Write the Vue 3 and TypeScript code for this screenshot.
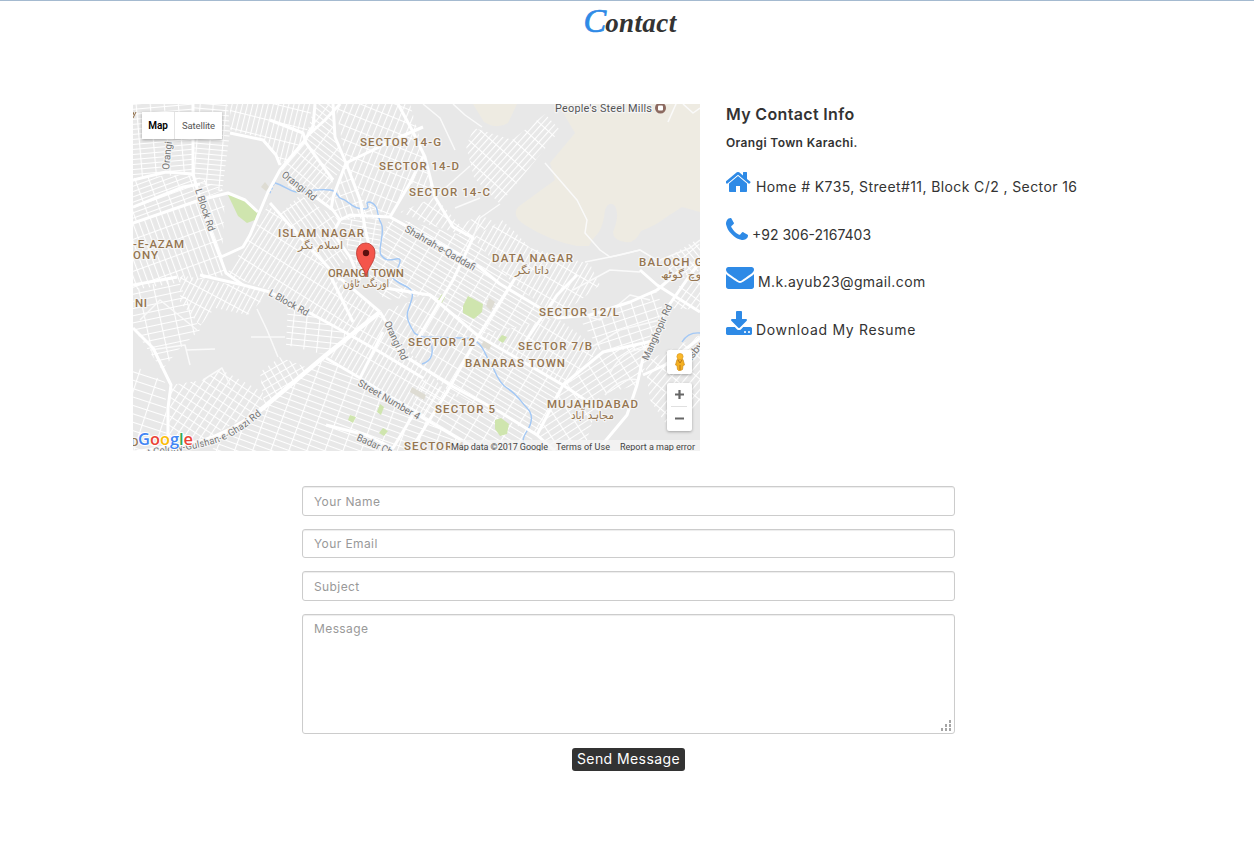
<script setup lang="ts">
interface Patch { pts: string; a: number; w: number; h: number }
interface Label { t: string; x: number; y: number; w: number; r?: number }

const patches: Patch[] = [
  { pts: '133,104 193,104 193,174 133,178', a: -5, w: 14, h: 5 },
  { pts: '193,104 228,104 230,132 222,192 193,180', a: 5, w: 13, h: 5 },
  { pts: '230,104 313,104 305,140 282,165 262,138 230,130', a: 14, w: 5, h: 17 },
  { pts: '133,178 193,174 224,190 200,200 133,222', a: -20, w: 13, h: 5 },
  { pts: '133,223 200,200 225,197 222,257 226,275 133,290', a: -20, w: 6, h: 15 },
  { pts: '248,240 268,205 300,237 335,280 380,312 350,335 270,290 226,275', a: 32, w: 5, h: 18 },
  { pts: '315,104 333,104 335,137 346,163 333,180 305,140', a: 38, w: 17, h: 5 },
  { pts: '335,104 410,104 425,157 435,197 410,183 390,217 366,205 346,163', a: 22, w: 6, h: 13 },
  { pts: '280,165 305,140 333,180 330,205 290,190', a: 40, w: 5, h: 15 },
  { pts: '346,163 366,205 390,217 340,220 331,210', a: -20, w: 6, h: 12 },
  { pts: '300,195 340,220 333,233 350,257 330,275 280,214', a: -35, w: 5, h: 16 },
  { pts: '340,220 381,218 381,250 366,277 350,257', a: 10, w: 12, h: 5 },
  { pts: '466,146 474,128 512,140 545,114 560,130 500,204 474,178', a: 42, w: 5, h: 15 },
  { pts: '435,197 460,225 480,215 495,222 473,238 430,225 400,212', a: 35, w: 6, h: 13 },
  { pts: '390,217 473,238 510,280 557,318 477,335 430,295 385,300 366,277', a: 31, w: 15, h: 5 },
  { pts: '473,238 502,220 515,232 530,248 590,264 600,285 557,318 510,280', a: 30, w: 5, h: 17 },
  { pts: '380,312 430,295 477,335 447,390 386,328', a: 31, w: 6, h: 16 },
  { pts: '326,355 380,312 386,328 447,392 423,418', a: 30, w: 5, h: 21 },
  { pts: '263,408 326,358 423,418 480,451 210,451', a: 20, w: 17, h: 6 },
  { pts: '423,378 447,390 537,435 520,451 475,451 410,410', a: 31, w: 16, h: 6 },
  { pts: '477,335 557,318 600,350 563,385', a: 31, w: 5, h: 17 },
  { pts: '447,392 477,338 563,385 537,435', a: 31, w: 17, h: 5 },
  { pts: '563,385 603,352 657,342 637,385 600,395 587,440 555,450 537,435', a: -33, w: 14, h: 6 },
  { pts: '580,320 657,291 663,310 645,350 600,350', a: -18, w: 11, h: 8 },
  { pts: '645,362 700,335 700,405 670,430 650,400', a: 40, w: 6, h: 16 },
  { pts: '667,308 693,262 700,256 700,310', a: 36, w: 6, h: 14 },
  { pts: '660,262 696,240 700,245 700,270 680,280', a: -40, w: 5, h: 12 },
  { pts: '133,290 177,277 200,330 180,348 162,370 133,328', a: -12, w: 15, h: 7 },
  { pts: '171,385 203,380 220,369 263,392 262,408 200,442 168,451', a: 33, w: 7, h: 8 },
  { pts: '133,365 165,382 168,451 133,451', a: 18, w: 19, h: 8 },
  { pts: '180,275 270,292 248,315 215,308 200,326 180,302', a: 28, w: 5, h: 16 },
  { pts: '260,372 280,357 308,368 264,405', a: -30, w: 7, h: 7 },
  { pts: '288,302 350,335 326,355 286,345', a: 6, w: 13, h: 6 },
]

const roads = [
  'M315 104 313 127 305 140 280 170 268 192 250 235 243 247 221 257',
  'M340 104 325 120 305 138', 'M133 180 166 172 193 174 205 217 226 273 243 285',
  'M133 207 183 187 200 184', 'M133 223 200 200 228 193 245 200 258 212',
  'M270 203 300 237 340 280', 'M230 133 263 140 276 155 280 165', 'M193 104V174',
  'M270 120 303 133 306 143 333 180', 'M333 104 335 137 346 163 360 200 366 233 373 260',
  'M346 163 400 137 423 127', 'M346 163 333 197 331 210',
  'M310 193 333 210 340 220 350 215 390 217 473 262 500 284 557 318',
  'M390 217 410 183 423 157', 'M340 220 333 233 350 257 360 280',
  'M398 104 412 130 425 157 435 197 453 227 473 238 453 280 417 340',
  'M700 262 690 275 667 308 643 358 637 385 627 415 597 451',
  'M640 270 657 285 700 312', 'M557 318 590 315 630 302 657 290 690 262',
  'M385 288 430 295 477 335 563 385 600 410', 'M403 355 450 385 500 412 537 435 555 451',
  'M517 275 477 338 447 392 410 451', 'M537 435 563 385 603 352 657 340',
  'M643 375 665 365 700 338', 'M525 342 557 295 577 275',
  'M200 275 243 285 270 292 310 313 350 335 380 352 423 378',
  'M133 328 153 348 171 385 168 408 168 451', 'M326 358 360 378 423 418 480 451',
  'M133 285 177 277', 'M383 332 360 378', 'M380 312 386 322 403 358',
  'M330 275 353 322', 'M340 278 380 312', 'M326 425 366 435 393 448 413 415',
]

const lanes = [
  'M453 104 465 115 482 127', 'M423 104 440 118 455 150', 'M545 163 577 200 587 220 585 233 600 250 610 257 640 250 660 262',
  'M500 204 480 218 473 238', 'M585 262 620 255 640 250', 'M676 104 668 122', 'M683 104 693 113 700 108',
  'M257 309 267 330 278 357', 'M251 337H285', 'M186 350 215 349', 'M203 380 222 368 230 385', 'M573 290 610 270 640 272',
  'M565 310 600 320 630 295 650 300', 'M610 373Q625 345 650 350', 'M605 395Q622 376 638 380', 'M655 262 690 248 700 240',
  'M140 320 160 300 197 330', 'M150 350 185 345 190 365', 'M590 348 620 330 660 320', 'M435 197 470 166', 'M455 208 480 198',
]

const areas: Label[] = [
  { t: 'SECTOR 14-G', x: 360, y: 146, w: 81 },
  { t: 'SECTOR 14-D', x: 379, y: 170, w: 80 },
  { t: 'SECTOR 14-C', x: 409, y: 196, w: 81 },
  { t: 'ISLAM NAGAR', x: 278, y: 237, w: 86 },
  { t: 'ORANGI TOWN', x: 328, y: 277, w: 76 },
  { t: 'DATA NAGAR', x: 492, y: 262, w: 81 },
  { t: 'BALOCH GOTH', x: 639, y: 266, w: 90 },
  { t: 'SECTOR 12/L', x: 539, y: 316, w: 80 },
  { t: 'SECTOR 12', x: 408, y: 346, w: 67 },
  { t: 'SECTOR 7/B', x: 518, y: 350, w: 74 },
  { t: 'BANARAS TOWN', x: 465, y: 367, w: 100 },
  { t: 'SECTOR 5', x: 435, y: 413, w: 60 },
  { t: 'MUJAHIDABAD', x: 547, y: 408, w: 91 },
  { t: 'SECTOR 4', x: 404, y: 450, w: 60 },
  { t: '-E-AZAM', x: 133, y: 248, w: 51 },
  { t: 'ONY', x: 133, y: 259, w: 25 },
  { t: 'NI', x: 135, y: 307, w: 12 },
  { t: 'D', x: 131, y: 446, w: 8 },
]
const urdu: Label[] = [
  { t: 'اسلام نگر', x: 298, y: 249, w: 45 },
  { t: 'اورنگی ٹاؤن', x: 343, y: 287, w: 46 },
  { t: 'داتا نگر', x: 515, y: 274, w: 34 },
  { t: 'بلوچ گوٹھ', x: 661, y: 278, w: 48 },
  { t: 'مجاہد آباد', x: 571, y: 419, w: 43 },
]
const streets: Label[] = [
  { t: 'Orangi Rd', x: 281, y: 176, w: 41, r: 38 },
  { t: 'Orangi Rd', x: 169, y: 170, w: 42, r: -84 },
  { t: 'L Block Rd', x: 195, y: 190, w: 44, r: 72 },
  { t: 'Shahrah-e-Qaddafi', x: 404, y: 231, w: 80, r: 30 },
  { t: 'L Block Rd', x: 268, y: 295, w: 44, r: 29 },
  { t: 'Orangi Rd', x: 384, y: 323, w: 42, r: 65 },
  { t: 'Street Number 4', x: 357, y: 385, w: 70, r: 30 },
  { t: 'Badar Chowk', x: 356, y: 440, w: 55, r: 24 },
  { t: 'Manghopir Rd', x: 648, y: 361, w: 60, r: -66 },
  { t: 'Kasby', x: 685, y: 369, w: 30, r: -52 },
]
const parks = [
  '228,195 241,197 258,212 255,220 247,223 238,216', '463,306 468,296 483,304 482,312 474,319 463,313',
  '438,300 442,294 445,297 442,303', '498,340 502,335 507,337 503,343', '495,420 501,418 509,424 507,434 500,436 495,429',
  '377,412 380,404 384,407 381,415', '348,420 350,415 356,417 353,423', '379,433 383,428 388,431 384,436',
]
const dots = [[9, 0], [5, 4], [9, 4], [1, 8], [5, 8], [9, 8]]

const contacts = [
  { id: 'home', text: 'Home # K735, Street#11, Block C/2 , Sector 16', w: 26, h: 21, box: '64 192 1664 1344',
    d: 'M1408 992v480q0 26-19 45t-45 19h-384v-384h-256v384h-384q-26 0-45-19t-19-45v-480q0-1 .5-3t.5-3l575-474 575 474q1 2 1 6zm223-69l-62 74q-8 9-21 11h-3q-13 0-21-7l-692-577-692 577q-12 8-24 7-13-2-21-11l-62-74q-8-10-7-23.5t11-21.5l719-599q32-26 76-26t76 26l244 204v-195q0-14 9-23t23-9h192q14 0 23 9t9 23v408l219 182q10 8 11 21.5t-7 23.5z' },
  { id: 'phone', text: '+92 306-2167403', w: 22, h: 22, box: '192 128 1408 1408',
    d: 'M1600 1240q0 27-10 70.5t-21 68.5q-21 50-122 106-94 51-186 51-27 0-53-3.5t-57.5-12.5-47-14.5-55.5-20.5-49-18q-98-35-175-83-127-79-264-216t-216-264q-48-77-83-175-3-9-18-49t-20.5-55.5-14.5-47-12.5-57.5-3.5-53q0-92 51-186 56-101 106-122 25-11 68.5-21t70.5-10q14 0 21 3 18 6 53 76 11 19 30 54t35 63.5 31 53.5q3 4 17.5 25t21.5 35.5 7 28.5q0 20-28.5 50t-62 55-62 53-28.5 46q0 9 5 22.5t8.5 20.5 14 24 11.5 19q76 137 174 235t235 174q2 1 19 11.5t24 14 20.5 8.5 22.5 5q18 0 46-28.5t53-62 55-62 50-28.5q14 0 28.5 7t35.5 21.5 25 17.5q25 15 53.5 31t63.5 35 54 30q70 35 76 53 3 7 3 21z' },
  { id: 'mail', text: 'M.k.ayub23@gmail.com', w: 28, h: 22, box: '0 256 1792 1408',
    d: 'M1792 710v794q0 66-47 113t-113 47h-1472q-66 0-113-47t-47-113v-794q44 49 101 87 362 246 497 345 57 42 92.5 65.5t94.5 48 110 24.5h2q51 0 110-24.5t94.5-48 92.5-65.5q170-123 498-345 57-39 100-87zm0-294q0 79-49 151t-122 123q-376 261-468 325-10 7-42.5 31t-54 38.5-52 32.5-57.5 27-50 9h-2q-23 0-50-9t-57.5-27-52-32.5-54-38.5-42.5-31q-91-64-262-182.5t-205-142.5q-62-42-117-115.5t-55-136.5q0-78 41.5-130t118.5-52h1472q65 0 112.5 47t47.5 113z' },
  { id: 'resume', text: 'Download My Resume', w: 26, h: 24, box: '64 0 1664 1536',
    d: 'M1344 1344q0-26-19-45t-45-19-45 19-19 45 19 45 45 19 45-19 19-45zm256 0q0-26-19-45t-45-19-45 19-19 45 19 45 45 19 45-19 19-45zm128-224v320q0 40-28 68t-68 28h-1472q-40 0-68-28t-28-68v-320q0-40 28-68t68-28h465l135 136q58 56 136 56t136-56l136-136h464q40 0 68 28t28 68zm-325-569q17 41-14 70l-448 448q-18 19-45 19t-45-19l-448-448q-31-29-14-70 17-39 59-39h256v-448q0-26 19-45t45-19h256q26 0 45 19t19 45v448h256q42 0 59 39z' },
]
</script>

<template>
  <main class="page">
    <h1 class="title"><span class="cap">C</span>ontact</h1>

    <section class="info-row">
      <div class="map">
        <svg class="canvas" width="567" height="347" viewBox="133 104 567 347">
          <defs>
            <pattern v-for="(p, i) in patches" :id="'grid' + i" :key="i" :width="p.w" :height="p.h"
              patternUnits="userSpaceOnUse" :patternTransform="`rotate(${p.a})`">
              <path :d="`M0 .5H${p.w}M.5 0V${p.h}`" stroke="#fff" stroke-width="1.2" fill="none" />
            </pattern>
            <path id="ghazi" d="M148 456C175 451 198 450 222 441Q246 430 272 405" />
          </defs>
          <rect x="133" y="104" width="567" height="347" fill="#e8e8e8" />
          <path fill="#eeebe2" d="M558 104 575 133 550 163 555 180 518 207Q511 216 525 225 550 241 577 246L589 246Q593 238 599 232 604 223 605 210 609 200 615 206 620 215 613 232 613 240 625 242 635 244 641 231 655 226 665 218L682 207 700 212V104ZM473 104 484 122Q497 130 508 123L517 104Z" />
          <polygon v-for="(p, i) in patches" :key="i" :points="p.pts" :fill="`url(#grid${i})`" />
          <polygon v-for="p in parks" :key="p" :points="p" fill="#cfe5ae" />
          <path fill="#dedcd3" d="M486 306 489 298 495 302 491 311ZM484 340 492 344 489 350 481 346ZM412 387 426 395 424 400 410 392ZM261 187 265 182 269 187 266 191Z" />
          <g fill="none" stroke="#a3c8f5" stroke-width="1.4">
            <path d="M275 183C286 186 292 194 302 192S321 189 330 190 336 198 342 199 352 209 363 209 362 202 370 202C380 205 376 215 381 223S377 250 381 255 387 261 396 259 397 268 393 278C400 287 415 285 412 298S404 313 410 325 415 333 423 337L460 338Q473 337 477 342C485 348 486 358 490 362S496 381 507 388 520 401 527 408 532 423 527 431 522 440 527 451" />
            <path d="M274 184 269 195" stroke-dasharray="2 2" /><path d="M430 338Q437 360 422 364M682 342Q688 332 700 333" />
          </g>
          <g class="lanes"><path v-for="r in lanes" :key="r" :d="r" /></g>
          <g class="roads"><path v-for="r in roads" :key="r" :d="r" /></g>
          <path class="highway" d="M380 312 326 355 263 408 Q232 433 200 442L133 453" />
          <g class="streets">
            <text v-for="(s, i) in streets" :key="i" :x="s.x" :y="s.y" :textLength="s.w" lengthAdjust="spacingAndGlyphs"
              :transform="`rotate(${s.r} ${s.x} ${s.y})`">{{ s.t }}</text>
            <text class="ghazi"><textPath href="#ghazi">t Colony-Gulshan-e-Ghazi Rd</textPath></text>
          </g>
          <g class="areas">
            <text v-for="(a, i) in areas" :key="i" :x="a.x" :y="a.y" :textLength="a.w">{{ a.t }}</text>
          </g>
          <g class="urdu">
            <text v-for="u in urdu" :key="u.t" :x="u.x" :y="u.y" :textLength="u.w" lengthAdjust="spacingAndGlyphs">{{ u.t }}</text>
          </g>
          <path d="M133 118 136 112M133 112 134 115" stroke="#8f6e49" />
          <text class="mill" x="555" y="112" textLength="97">People's Steel Mills</text>
          <circle cx="660.5" cy="108" r="5.5" fill="#8c6a60" /><rect x="658" y="105.5" width="5" height="5" rx="1" fill="#fff" />
          <path d="M366 277C364.500 267 356.500 263 356.500 252.500A9.200 9.500 0 0 1 375 252.500C375 263 367.500 267 366 277Z" fill="#f4554b" stroke="#b7352d" stroke-width=".8" />
          <circle cx="366" cy="253" r="3.2" fill="#5c1110" />
          <rect x="450" y="440" width="250" height="11" fill="#f5f5f5" opacity=".75" />
          <g class="credits">
            <text x="451" y="450" textLength="97">Map data ©2017 Google</text>
            <text x="556" y="450" textLength="54">Terms of Use</text>
            <text x="620" y="450" textLength="75">Report a map error</text>
          </g>
          <text class="google" x="138" y="445" textLength="55" lengthAdjust="spacingAndGlyphs"><tspan fill="#4285f4">G</tspan><tspan fill="#ea4335">o</tspan><tspan fill="#fbbc05">o</tspan><tspan fill="#4285f4">g</tspan><tspan fill="#34a853">l</tspan><tspan fill="#ea4335">e</tspan></text>
        </svg>
        <div class="kinds"><b>Map</b><span>Satellite</span></div>
        <div class="controls">
          <div class="pegman">
            <svg width="12" height="18" viewBox="0 0 12 18"><path d="M3 6.500H9L10.500 12 9 12.500 8.500 16.500 6.500 17.500H4.500L3.500 16.500 3 12.500 1.500 12Z" fill="#f4b020" stroke="#cf8b18" stroke-width=".7" /><path d="M4 7 6 10 8 7M6 12V17" stroke="#b8741a" fill="none" /><circle cx="6" cy="3.600" r="3.100" fill="#fbb829" stroke="#d79a22" stroke-width=".7" /></svg>
          </div>
          <div class="zoom">
            <svg width="25" height="48" viewBox="0 0 25 48"><path d="M8 11.500H17M12.500 7V16M8 35.500H17" stroke="#666" stroke-width="2.200" /><path d="M4 23.500H20" stroke="#e0e0e0" /></svg>
          </div>
        </div>
      </div>

      <div class="info">
        <h2>My Contact Info</h2>
        <h3>Orangi Town Karachi.</h3>
        <ul>
          <li v-for="c in contacts" :key="c.id" :class="c.id">
            <svg :width="c.w" :height="c.h" :viewBox="c.box"><path :d="c.d" fill="#2e8ae6" /></svg><span>{{ c.text }}</span>
          </li>
        </ul>
      </div>
    </section>

    <form class="form" @submit.prevent>
      <input class="name" placeholder="Your Name">
      <input class="email" placeholder="Your Email">
      <input class="subject" placeholder="Subject">
      <div class="message">
        <textarea placeholder="Message"></textarea>
        <svg class="grip" width="12" height="12"><rect v-for="(d, i) in dots" :key="i" :x="d[0]" :y="d[1]" width="2" height="3" fill="#a5a5a5" /></svg>
      </div>
      <button>Send Message</button>
    </form>
  </main>
</template>

<style>
body { margin: 0; background: #fff; }
</style>

<style scoped>
.page { box-sizing: border-box; height: 861px; border-top: 1px solid #a4bad0; overflow: hidden; font-family: Inter, "Liberation Sans", sans-serif; color: #333; }
.title { margin: 0; height: 103px; padding-left: 6px; text-align: center; font: italic bold 27px/40px "Liberation Serif", serif; letter-spacing: .4px; }
.cap { color: #2e8ae6; font-size: 34px; font-weight: 400; -webkit-text-stroke: .7px #2e8ae6; letter-spacing: -1px; }
.info-row { display: flex; gap: 26px; padding-left: 133px; height: 382px; }
.map { position: relative; width: 567px; height: 347px; overflow: hidden; }
.canvas { display: block; }
.roads { fill: none; stroke: #fff; stroke-width: 3; stroke-linejoin: round; }
.lanes { fill: none; stroke: #fafafa; stroke-width: 1.5; stroke-linejoin: round; }
.highway { fill: none; stroke: #fff; stroke-width: 4.5; }
.canvas text { font-family: Roboto, "DejaVu Sans", sans-serif; paint-order: stroke; stroke: #f4f4f4; stroke-width: 2.5px; stroke-linejoin: round; }
.areas text { font-size: 11.500px; font-weight: 500; fill: #947550; }
.urdu text { font-size: 11px; font-family: "DejaVu Sans", sans-serif; fill: #947550; }
.streets text { font-size: 10px; fill: #737373; }
.streets .ghazi { font-size: 9.800px; }
.canvas .mill { font-size: 11px; fill: #555; }
.credits text { font-size: 9px; fill: #444; stroke: none; }
.canvas .google { font: 600 17px "Open Sans", sans-serif; stroke: #fff; stroke-width: 2px; }
.kinds { position: absolute; left: 9px; top: 8px; display: flex; height: 27px; background: #fff; box-shadow: 0 1px 3px rgba(0, 0, 0, .3); font: 10px/27px Roboto, sans-serif; color: #565656; }
.kinds b { width: 32px; text-align: center; color: #000; font-weight: 600; border-right: 1px solid #e4e4e4; }
.kinds span { width: 47px; text-align: center; font-size: 9.500px; letter-spacing: -.1px; }
.controls { position: absolute; left: 534px; top: 246px; display: grid; gap: 9px; }
.pegman, .zoom { width: 25px; background: #fff; border-radius: 2px; box-shadow: 0 1px 3px rgba(0, 0, 0, .3); }
.pegman { height: 24px; display: grid; place-items: center; }
.zoom { height: 48px; }
.info h2 { margin: 0; font-size: 16px; line-height: 20px; font-weight: 600; letter-spacing: .34px; }
.info h3 { margin: 11px 0 0; font-size: 12px; line-height: 16px; font-weight: 600; letter-spacing: .36px; }
.info ul { list-style: none; margin: 16px 0 0; padding: 0; }
.info li { height: 47.600px; line-height: 40px; font-size: 14px; white-space: nowrap; }
.info li svg { margin-right: 4px; vertical-align: baseline; }
.info li.mail svg { vertical-align: -2px; }
.home, .mail { letter-spacing: .4px; }
.resume { letter-spacing: .68px; }
.form { width: 653px; margin-left: 302px; display: flex; flex-direction: column; gap: 13px; }
input, textarea { box-sizing: border-box; display: block; width: 100%; margin: 0; padding: 6px 11px; border: 1px solid #ccc; border-radius: 3px; background: #fff; box-shadow: inset 0 1px 1px rgba(0, 0, 0, .075); font: 12px/17px Inter, sans-serif; letter-spacing: .4px; outline: 0; }
input { height: 30px; }
.email { height: 29px; }
textarea { height: 120px; padding-top: 5px; resize: none; overflow: hidden; }
::placeholder { color: #999; opacity: 1; }
.message { position: relative; }
.grip { position: absolute; right: 3px; bottom: 2px; }
button { align-self: center; width: 113px; height: 23px; margin-top: 1px; padding: 0 0 1px; border: 0; border-radius: 3px; background: #333; color: #fff; font: 14px/22px Inter, sans-serif; letter-spacing: .42px; white-space: nowrap; }
</style>
